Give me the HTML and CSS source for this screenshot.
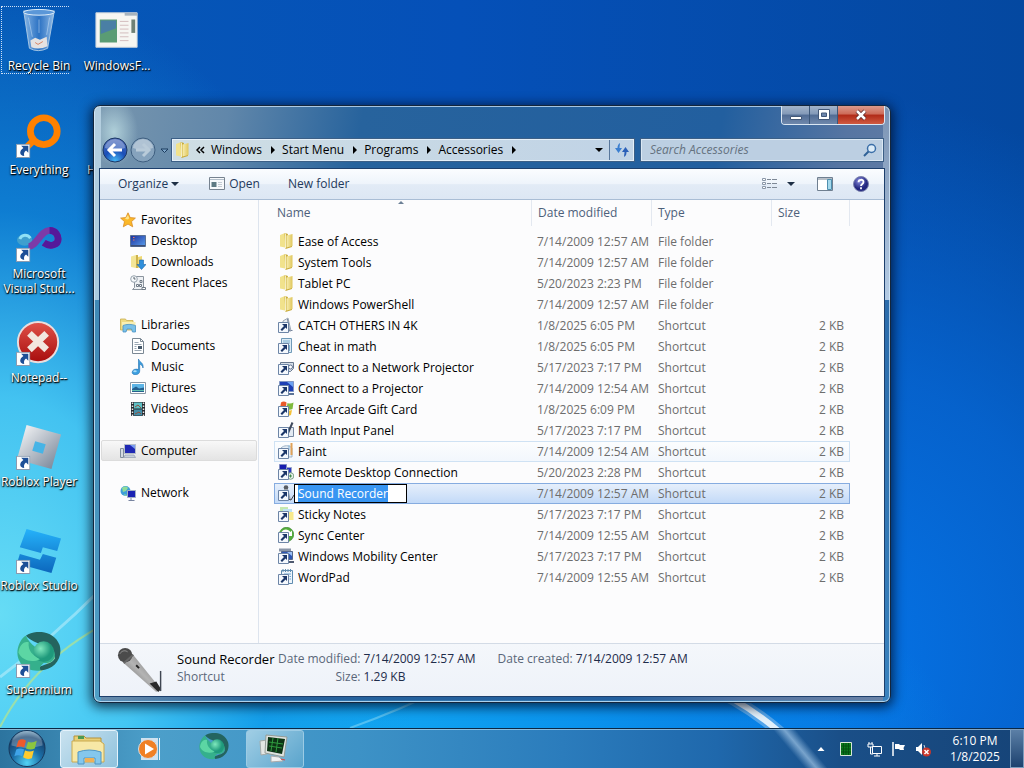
FILE: index.html
```
<!DOCTYPE html>
<html lang="en">
<head>
    <meta charset="utf-8">
    <title>Accessories</title>
    <link rel="stylesheet" href="styles.css">
</head>
<body>
    <!-- shared icons -->
    <svg class="sprite" aria-hidden="true">
        <defs>
            <linearGradient id="g-folder" x1="0" x2="1"><stop offset="0" stop-color="#f8eeb0"/><stop offset="1" stop-color="#dfc65c"/></linearGradient>
            <linearGradient id="g-blue" x1="0" x2="1" y1="0" y2="1"><stop offset="0" stop-color="#1c2f9c"/><stop offset="1" stop-color="#5aa0ee"/></linearGradient>
            <linearGradient id="g-silver" x1="0" x2="1" y1="0" y2="1"><stop offset="0" stop-color="#fdfdfd"/><stop offset="1" stop-color="#6f7e92"/></linearGradient>
            <linearGradient id="g-studio" x1="0" x2="0" y1="0" y2="1"><stop offset="0" stop-color="#25b2fa"/><stop offset="1" stop-color="#0c67bd"/></linearGradient>
            <linearGradient id="g-red" x1="0" x2="0" y1="0" y2="1"><stop offset="0" stop-color="#e0534a"/><stop offset="1" stop-color="#a80d0d"/></linearGradient>
            <linearGradient id="g-bin" x1="0" x2="1"><stop offset="0" stop-color="#a9cdf0" stop-opacity=".8"/><stop offset=".5" stop-color="#3c7cc8" stop-opacity=".7"/><stop offset="1" stop-color="#b8d6f2" stop-opacity=".8"/></linearGradient>
            <linearGradient id="g-mic" x1="0" x2="1" y1="1" y2="0"><stop offset="0" stop-color="#444"/><stop offset=".5" stop-color="#b4b4b4"/><stop offset="1" stop-color="#666"/></linearGradient>
            <radialGradient id="g-help" cx=".4" cy=".3"><stop offset="0" stop-color="#8a8ee0"/><stop offset="1" stop-color="#22267f"/></radialGradient>
            <radialGradient id="g-merm" cx=".35" cy=".35"><stop offset="0" stop-color="#7fe8bd"/><stop offset="1" stop-color="#1f9a7c"/></radialGradient>
            <radialGradient id="g-orb" cx=".5" cy=".9" r=".9"><stop offset="0" stop-color="#52d3f5"/><stop offset=".45" stop-color="#1b6fa8"/><stop offset=".8" stop-color="#16426e"/><stop offset="1" stop-color="#7ba6c2"/></radialGradient>
            <radialGradient id="g-back" cx=".5" cy=".95" r=".9"><stop offset="0" stop-color="#45b8f5"/><stop offset=".5" stop-color="#1b4fb8"/><stop offset="1" stop-color="#4a69b8"/></radialGradient>
        </defs>

        <symbol id="arrow" viewBox="0 0 14 14">
            <path d="M.5.5h13v13H.5z" fill="#fff" stroke="#8a9bb0"/>
            <path d="M5 2h7v7L9.800 6.800C8 8 7.500 9.500 8 12 3.500 11.500 2.500 7.500 7.200 4.200z" fill="#1d4f97"/>
        </symbol>
        <symbol id="link" viewBox="0 0 11 11">
            <path d="M.5.5h10v10H.5z" fill="#f4f8fd" stroke="#6d85a6"/>
            <path d="M4 2h5v5L7.500 5.500 4 9 2.500 7.500 6 4z" fill="#1b3668"/>
        </symbol>
        <symbol id="folder" viewBox="0 0 16 16">
            <path d="M2 2 7 0v14.500L2 13.500z" fill="#f1e28c"/>
            <path d="M6.500 .5H9l1 1v11l4-1v2.500L7.500 16z" fill="#c9ab38"/>
            <path d="M8.500 2.500 14.500 1v12l-6 1.500z" fill="url(#g-folder)"/>
            <path d="M7.500 1v14" stroke="#fffbe0" stroke-width=".8"/>
        </symbol>
        <symbol id="star" viewBox="0 0 16 16">
            <path d="m8 .8 2.200 4.800 5.200.5-3.900 3.500 1.200 5.200L8 12.100l-4.700 2.700 1.200-5.200L.6 6.100l5.200-.5z" fill="#fbb829" stroke="#d98b24" stroke-width=".8"/>
            <path d="m8 3 1.200 3.300L8 7.500 5 7z" fill="#ffe58a"/>
        </symbol>
        <symbol id="desktop" viewBox="0 0 16 16">
            <path d="M.5 2.500h15v11H.5z" fill="url(#g-blue)" stroke="#5b7296"/>
            <path d="M1 12h14v1.500H1z" fill="#3c4f78"/><path d="M3 4.500h1.500M3 7h1.500" stroke="#e9785a"/>
        </symbol>
        <symbol id="downloads" viewBox="0 0 16 16">
            <path d="M1 2.500 6 1v13l-5-1z" fill="#f3e596"/><path d="M6 1h2v13H6z" fill="#cdb24c"/><path d="M8 3l4-1v11l-4 1z" fill="#efd874"/>
            <path d="M9.500 6h4v4.500H16l-4.500 5-4.500-5h2.500z" fill="#2f8fdc" stroke="#1b64a8" stroke-width=".6"/>
        </symbol>
        <symbol id="recent" viewBox="0 0 16 16">
            <path d="M4.500 1.500h9v13h-11l2-2z" fill="#eef1f4" stroke="#8b949e"/>
            <path d="M12 12.500h3.500v2H12zM6.500 9.500h2v2h-2zM10 5.500h2v2h-2zM9.500 9.500h2v2h-2z" fill="#fff" stroke="#6e7984"/>
            <circle cx="4" cy="4" r="3.300" fill="#f6f9fb" stroke="#97a2ad"/><path d="M4 2v2h1.500" fill="none" stroke="#55606b"/>
        </symbol>
        <symbol id="libraries" viewBox="0 0 16 16">
            <path d="M.5 2h5l1 1.500H13V13H.5z" fill="#efdc84" stroke="#c9ad4e" stroke-width=".8"/>
            <path d="M2 5h13.500v4H2z" fill="#f9efb4"/>
            <path d="M3 8.500c3-1.500 9-1.500 12.500 0V15h-3l-1-3H7l-1 3H3z" fill="#79c0e8" stroke="#4a93c4" stroke-width=".8"/>
        </symbol>
        <symbol id="documents" viewBox="0 0 16 16">
            <path d="M2.500.5h8l3 3v12h-11z" fill="#fff" stroke="#7b8894"/><path d="M10.500.5v3h3" fill="none" stroke="#7b8894"/>
            <path d="M4.500 4.500h4M4.500 6.500h7M4.500 8.500h2M4.500 10.500h2M4.500 12.500h7" stroke="#9aa7b3"/><path d="M8 8h4v3H8z" fill="#46586a"/>
        </symbol>
        <symbol id="music" viewBox="0 0 16 16">
            <path d="M8.500 0c.5 3 5.500 3.500 4.500 9-.5-2.500-2-3.500-3.300-3.800V12c0 5-8.200 4.500-7.500 1 .5-2.500 3.300-3.500 6.300-2.500z" fill="#3c9fe0" stroke="#1f6eb0" stroke-width=".6"/>
            <ellipse cx="5" cy="12.300" rx="1.800" ry="1" fill="#a8dcf8"/>
        </symbol>
        <symbol id="pictures" viewBox="0 0 16 16">
            <path d="M.5 2.500h15v11H.5z" fill="#fff" stroke="#8a97a5"/><path d="M2 4h12v8H2z" fill="#5db4e6"/><path d="m2 9 4-2.500 3 2 5-1V12H2z" fill="#245f8f"/><path d="M2 10.500h12" stroke="#62c3b0"/>
        </symbol>
        <symbol id="videos" viewBox="0 0 16 16">
            <path d="M1 1h14v14H1z" fill="#25292e"/><path d="M4 1.500h8v6H4z" fill="#5fc0c4"/><path d="M4 8.500h8v6H4z" fill="#458ea8"/>
            <path d="M2.500 1.500v14M13.500 1.500v14" stroke="#e8e8e8" stroke-width="1.500" stroke-dasharray="1.500 1.500"/><path d="m5 6 3-2 3 3M5 13l4-2 2 2" stroke="#8f5140" fill="none"/>
        </symbol>
        <symbol id="computer" viewBox="0 0 16 16">
            <path d="M4.500 1.500h11v9h-11z" fill="#1f28b4" stroke="#b4bdc9"/><path d="M10 2h5v4z" fill="#7a9cf0"/>
            <path d="M.5 5.500h3v9h-3z" fill="#d3dae2" stroke="#808d9c"/><path d="M5 12h9l1.500 2.500H4z" fill="#c7d0dc" stroke="#8694a8" stroke-width=".6"/>
        </symbol>
        <symbol id="network" viewBox="0 0 16 16">
            <circle cx="5.500" cy="6" r="5" fill="#3e9fd8"/><path d="M2 3c2-2 5-2 6 0L6 6 3 7zM4 9l3 1-2 1z" fill="#8fdc9a"/>
            <path d="M7.500 5.500h8v7h-8z" fill="#1a22b2" stroke="#a3b0c2"/><path d="M11 13v2M8.500 15.500h6" stroke="#7884a0"/>
        </symbol>

        <!-- shortcut targets, the link arrow sits bottom left -->
        <symbol id="f-catch" viewBox="0 0 16 16"><path d="M5 4 10 1l3 13H5z" fill="#e8edf3" stroke="#9aa6b5"/><path d="M9.500 2l2 12M12.500 13.500h2" stroke="#74839a"/><use href="#link" y="5" width="11" height="11"/></symbol>
        <symbol id="f-page" viewBox="0 0 16 16"><path d="M3.500.5h10v14h-10z" fill="#dcebf5" stroke="#6f9ab8"/><path d="M5 3h7M5 5h7M11.500 7v6" stroke="#79b0d0"/><use href="#link" y="5" width="11" height="11"/></symbol>
        <symbol id="f-netproj" viewBox="0 0 16 16"><path d="M2.500 3.500h13v6l-3 3h-10z" fill="#d6dfe9" stroke="#68788e"/><circle cx="12.500" cy="8" r="2" fill="#fff" stroke="#5f7191"/><use href="#link" y="5" width="11" height="11"/></symbol>
        <symbol id="f-proj" viewBox="0 0 16 16"><path d="M1.500 1.500h14v10h-14z" fill="#1d3fb4" stroke="#7f95c4"/><path d="M9 2h6v5z" fill="#6da2f2"/><path d="M11 13h5v2h-5z" fill="#5b7396"/><use href="#link" y="5" width="11" height="11"/></symbol>
        <symbol id="f-gift" viewBox="0 0 16 16"><path d="M3 1.500c2-1.500 4-1 5.500 0L8 7H2z" fill="#e85a2a"/><path d="M9.500 2c2 1 4 .5 6-.5L14.500 8c-2 1-4 1-6 0z" fill="#7fba3c"/><path d="M8 9c2 1 4 .5 6 0l-1 5c-2 1-4 .5-5 0z" fill="#f4c136"/><use href="#link" y="5" width="11" height="11"/></symbol>
        <symbol id="f-math" viewBox="0 0 16 16"><path d="M2.500 5.500h13v9h-13z" fill="#e3eaf2" stroke="#7788a0"/><path d="m10 11 4.500-10.500" stroke="#3f4a5e" stroke-width="2"/><use href="#link" y="5" width="11" height="11"/></symbol>
        <symbol id="f-paint" viewBox="0 0 16 16"><path d="M3 5c3-3 8-3 11 0v9H3z" fill="#e5eef6" stroke="#9fb3c6"/><path d="M13.500 0v12" stroke="#e0a258" stroke-width="2"/><path d="M11 2v5" stroke="#87b9dd"/><use href="#link" y="5" width="11" height="11"/></symbol>
        <symbol id="f-remote" viewBox="0 0 16 16"><path d="M1.500.5h7v6h-7z" fill="#1a1fae" stroke="#7e8ac2"/><path d="M8.500 3.500h5v6h-5z" fill="#2a36c2" stroke="#98a6c8"/><circle cx="12.500" cy="12" r="3.300" fill="#e9f2ea" stroke="#7c9f87"/><path d="M11 12h3M12.500 10.500v3" stroke="#3f8b4a"/><use href="#link" y="5" width="11" height="11"/></symbol>
        <symbol id="f-sound" viewBox="0 0 16 16"><circle cx="8" cy="2.500" r="2.300" fill="#565b62"/><path d="M6 4h4l3 11H8z" fill="#9ca2aa"/><path d="m10 14 3 1 3-5" fill="none" stroke="#444"/><use href="#link" y="5" width="11" height="11"/></symbol>
        <symbol id="f-sticky" viewBox="0 0 16 16"><path d="M2 1h8v8H2z" fill="#c4e8b0"/><path d="M5 3h9v9H5z" fill="#bfe3f4"/><path d="M7 6h8.500v8H7z" fill="#f8ea8c"/><use href="#link" y="5" width="11" height="11"/></symbol>
        <symbol id="f-sync" viewBox="0 0 16 16"><circle cx="8.500" cy="7.500" r="7.200" fill="#55ae3c" stroke="#2f7c26" stroke-width=".6"/><path d="M3 6c2-4.500 7-4.500 9.500-1L14 3.500V9H9l1.500-1.700C9.500 5 7 5 5.500 7z" fill="#fff"/><use href="#link" y="5" width="11" height="11"/></symbol>
        <symbol id="f-mobility" viewBox="0 0 16 16"><path d="M1 .5h12v3H1z" fill="#8a96a8"/><path d="M3.500 3.500h11v8h-11z" fill="#2c56b4" stroke="#55678a"/><path d="M10 13h6v2h-6z" fill="#4e5a70"/><path d="M9 4h5v4z" fill="#9cc0f4"/><use href="#link" y="5" width="11" height="11"/></symbol>
        <symbol id="f-wordpad" viewBox="0 0 16 16"><path d="M3.500 1.500h11v13h-11z" fill="#eef5fb" stroke="#5f8cb0"/><path d="M5 0v3M7.500 0v3M10 0v3M12.500 0v3" stroke="#5f8cb0"/><path d="M6 5h7M11.500 7.500H13M11.500 10H13" stroke="#6aa6d2"/><use href="#link" y="5" width="11" height="11"/></symbol>

        <symbol id="mermaid" viewBox="0 0 48 44">
            <path d="M10 4C20-3 40-2 46 14c4 14-6 26-20 27-8-6 12-5 15-13C38 12 20 15 10 4z" fill="#24645f"/>
            <path d="M10 4c2 5 6 9 10 12 8-6 20-2 21 8 0 7-6 10-12 9-4 4-5 5-3 8C10 43 0 33 1 20 2 12 6 6 10 4z" fill="#35b08c"/>
            <circle cx="29" cy="21" r="11" fill="url(#g-merm)"/>
            <path d="M2 22C3 14 8 9 13 11c-1 9 4 14 12 18-8 4-19 2-23-7z" fill="#5cd6a4"/>
        </symbol>
    </svg>

    <main class="desktop">
        <svg class="wallpaper" viewBox="0 0 1024 728" preserveAspectRatio="none" aria-hidden="true">
            <path d="M0 677Q50 640 100 590" fill="none" stroke="#c9f2fb" stroke-opacity=".5" stroke-width="3"/>
            <path d="M0 727Q40 650 130 612" fill="none" stroke="#c7e77c" stroke-opacity=".6" stroke-width="2"/>
            <path d="M350 728Q400 710 440 690" fill="none" stroke="#8fdcf6" stroke-opacity=".5" stroke-width="2"/>
            <path d="M700 684Q740 698 782 734" fill="none" stroke="#9cc8ee" stroke-opacity=".5" stroke-width="12"/>
            <path d="M700 684Q740 698 782 734" fill="none" stroke="#f2f8fc" stroke-opacity=".9" stroke-width="6"/>
        </svg>

        <div class="icons">
            <a class="icon icon-focus" href="#">
                <svg viewBox="0 0 48 48"><path d="m8 3 6 39q9 5 19 0l7-39z" fill="url(#g-bin)" stroke="#a8c8e4"/><ellipse cx="24" cy="4.500" rx="16" ry="3" fill="#5b97d8" stroke="#e2effa"/><path d="m15 34 5-3 5 2 7-3 1 10q-9 4-17 1z" fill="#e4e2e2"/><path d="m20 36 3 2 5-3" stroke="#d8825f" fill="none"/><path d="M13 10l4 20M35 10l-3 18M24 12v14" stroke="#d6e8f8" stroke-opacity=".5"/></svg>
                <span>Recycle Bin</span>
            </a>
            <a class="icon" href="#">
                <svg viewBox="0 0 48 48"><path d="M2 5h43v36H2z" fill="#f6f6f2" stroke="#c9d2da"/><path d="M32 5h13v3H32z" fill="#a8b4be"/><path d="M6 12h18v24H6z" fill="#5a9c74"/><path d="M7 13h16v8L7 27z" fill="#4a7fa5"/><path d="M27 14h9M27 18h9M27 22h9M27 26h9M27 30h9M27 34h9" stroke="#d3bcbc"/><path d="M39 12h4v14h-4z" fill="#6f8076"/></svg>
                <span>WindowsF...</span>
            </a>
            <a class="icon" href="#">
                <svg viewBox="0 0 48 48"><circle cx="29" cy="20" r="14" fill="none" stroke="#ff8100" stroke-width="7"/><path d="m20 28-9 9" stroke="#ff8100" stroke-width="7"/><use href="#arrow" y="33" width="15" height="15"/></svg>
                <span>Everything</span>
            </a>
            <a class="icon icon-cut" href="#">
                <svg viewBox="0 0 48 48"></svg>
                <span>H</span>
            </a>
            <a class="icon" href="#">
                <svg viewBox="0 0 48 48"><ellipse cx="9" cy="25" rx="8" ry="6" fill="#3f9fce"/><path d="M4 24c2-5 8-5 11-1" stroke="#8fe0f6" stroke-width="3" fill="none"/><path d="M13 32c8 0 13-17 22-17 7 0 9 6 9 9 0 6-8 9-15 4" fill="none" stroke="#7c3aa8" stroke-width="7"/><path d="M29 28c7 5 15 2 15-4 0-3-2-9-9-9" fill="none" stroke="#55189a" stroke-width="7"/><use href="#arrow" y="33" width="15" height="15"/></svg>
                <span>Microsoft Visual&nbsp;Stud...</span>
            </a>
            <i></i>
            <a class="icon" href="#">
                <svg viewBox="0 0 48 48"><circle cx="23" cy="23" r="21" fill="url(#g-red)" stroke="#e9dede" stroke-width="2"/><path d="m14 14 18 17M32 14 14 31" stroke="#f2e7df" stroke-width="7"/><use href="#arrow" y="33" width="15" height="15"/></svg>
                <span>Notepad--</span>
            </a>
            <i></i>
            <a class="icon" href="#">
                <svg viewBox="0 0 48 48"><path d="m11 1 36 10-10 36L1 37z" fill="url(#g-silver)"/><path d="m20 18 11 3-3 10-11-3z" fill="#47b4e6"/><use href="#arrow" y="33" width="15" height="15"/></svg>
                <span>Roblox&nbsp;Player</span>
            </a>
            <i></i>
            <a class="icon" href="#">
                <svg viewBox="0 0 48 48"><path d="m11 1 36 10-4 13-15-4-2 6L4 20zM4 27l21 6 3-6 14 4-5 16L1 37z" fill="url(#g-studio)"/><use href="#arrow" y="33" width="15" height="15"/></svg>
                <span>Roblox&nbsp;Studio</span>
            </a>
            <i></i>
            <a class="icon" href="#">
                <svg viewBox="0 0 48 48"><use href="#mermaid" width="48" height="43"/><use href="#arrow" y="33" width="15" height="15"/></svg>
                <span>Supermium</span>
            </a>
        </div>

        <section class="window" aria-label="Accessories">
            <header class="titlebar">
                <div class="caption">
                    <button class="cap cap-min" aria-label="Minimize"><svg viewBox="0 0 14 12"><path d="M1.500 7.500h11v3h-11z" fill="#fff" stroke="#435878"/></svg></button>
                    <button class="cap cap-max" aria-label="Maximize"><svg viewBox="0 0 14 12"><path d="M1.500.5h11v10h-11z" fill="#fff" stroke="#435878"/><path d="M4.500 4h5v3.500h-5z" fill="#6c86ab" stroke="#435878"/></svg></button>
                    <button class="cap cap-close" aria-label="Close"><svg viewBox="0 0 14 12"><path d="m3 2 8 8M11 2l-8 8" stroke="#5b2626" stroke-width="4"/><path d="m3 2 8 8M11 2l-8 8" stroke="#fff" stroke-width="2.500"/></svg></button>
                </div>
            </header>

            <div class="address">
                <button class="nav-btn" aria-label="Back"><svg viewBox="0 0 26 26"><circle cx="13" cy="13" r="12" fill="url(#g-back)" stroke="#1c3764"/><path d="M3 11a10 9 0 0 1 20 0q-10 4-20 0z" fill="#fff" fill-opacity=".3"/><path d="M20 13H8m5-6-6 6 6 6" fill="none" stroke="#fff" stroke-width="3"/></svg></button>
                <button class="nav-btn" aria-label="Forward"><svg viewBox="0 0 26 26"><circle cx="13" cy="13" r="12" fill="#86a3bd" stroke="#3f5f80"/><path d="M3 11a10 9 0 0 1 20 0q-10 4-20 0z" fill="#fff" fill-opacity=".35"/><path d="M6 13h12m-5-6 6 6-6 6" fill="none" stroke="#b9cbd9" stroke-width="3"/></svg></button>
                <button class="nav-drop" aria-label="Recent pages"><svg viewBox="0 0 9 6"><path d="M1 1h7L4.500 4.500z" fill="#7fa8cc" stroke="#1b3a5c"/></svg></button>
                <nav class="path">
                    <svg class="i16"><use href="#folder"/></svg>
                    <button aria-label="More folders"><svg class="more" viewBox="0 0 9 8"><path d="M4 1 1 4l3 3M8 1 5 4l3 3" fill="none" stroke="#000" stroke-width="1.500"/></svg></button>
                    <button>Windows</button><b></b>
                    <button>Start Menu</button><b></b>
                    <button>Programs</button><b></b>
                    <button>Accessories</button><b></b>
                    <span class="grow"></span>
                    <i class="caret"></i>
                    <button class="refresh" aria-label="Refresh"><svg viewBox="0 0 16 16"><path d="M6 1C4 2 3.500 4 3.500 6H1l3.500 5L8 6H5.500C5.500 4 6 3 6 1z" fill="#3b7fd0"/><path d="M10 15c2-1 2.500-3 2.500-5H15l-3.500-5L8 10h2.500c0 2-.5 3-.5 5z" fill="#2a5fb8"/></svg></button>
                </nav>
                <label class="search">
                    <input type="text" placeholder="Search Accessories" aria-label="Search Accessories">
                    <svg viewBox="0 0 14 14"><circle cx="8.500" cy="5.500" r="4" fill="#dcecf8" stroke="#3b6fa8" stroke-width="1.500"/><path d="m5.500 8.500-4.500 4.500" stroke="#2f6196" stroke-width="2"/></svg>
                </label>
            </div>

            <div class="client">
                <div class="toolbar">
                    <button class="organize">Organize <i class="caret"></i></button>
                    <button class="open"><svg class="i16" viewBox="0 0 16 16"><path d="M.5 1.500h15v12H.5z" fill="#f7f9fb" stroke="#76828f"/><path d="M1 3.500h14" stroke="#b3bfca"/><path d="M2.500 6h5v5h-5z" fill="#5e7a83"/><path d="M9 6.500h4M9 8.500h4M9 10.500h4" stroke="#c3cbd3"/></svg>Open</button>
                    <button>New folder</button>
                    <span class="grow"></span>
                    <button class="views" aria-label="Change your view"><svg class="i16" viewBox="0 0 16 16"><path d="M.5 2.500h3v2h-3zM.5 6.500h3v2h-3zM.5 10.500h3v2h-3z" fill="#fff" stroke="#8a97a8"/><path d="M5 3.500h4M5 7.500h4M5 11.500h4M10 3.500h5M10 7.500h5M10 11.500h5" stroke="#7d8896"/></svg><i class="caret"></i></button>
                    <button class="preview" aria-label="Show the preview pane"><svg class="i16" viewBox="0 0 16 16"><path d="M.5 1.500h15v13H.5z" fill="#fff" stroke="#6f7f90"/><path d="M.5 3h15" stroke="#6f7f90"/><path d="M10.500 3.500h4v10h-4z" fill="#a5d9ec" stroke="#4f8fae"/></svg></button>
                    <button class="help" aria-label="Get help"><svg class="i16" viewBox="0 0 16 16"><circle cx="8" cy="8" r="7.500" fill="url(#g-help)" stroke="#7b82ae"/><path d="M5.500 6.200C5.500 3 10.500 3 10.500 6c0 2-2.500 1.900-2.500 4M8 11.200v2" fill="none" stroke="#fff" stroke-width="1.800"/></svg></button>
                </div>

                <div class="panes">
                    <nav class="tree">
                        <a href="#"><svg class="i16"><use href="#star"/></svg>Favorites</a>
                        <a class="sub" href="#"><svg class="i16"><use href="#desktop"/></svg>Desktop</a>
                        <a class="sub" href="#"><svg class="i16"><use href="#downloads"/></svg>Downloads</a>
                        <a class="sub" href="#"><svg class="i16"><use href="#recent"/></svg>Recent Places</a>
                        <a class="group" href="#"><svg class="i16"><use href="#libraries"/></svg>Libraries</a>
                        <a class="sub" href="#"><svg class="i16"><use href="#documents"/></svg>Documents</a>
                        <a class="sub" href="#"><svg class="i16"><use href="#music"/></svg>Music</a>
                        <a class="sub" href="#"><svg class="i16"><use href="#pictures"/></svg>Pictures</a>
                        <a class="sub" href="#"><svg class="i16"><use href="#videos"/></svg>Videos</a>
                        <a class="group current" href="#"><svg class="i16"><use href="#computer"/></svg>Computer</a>
                        <a class="group" href="#"><svg class="i16"><use href="#network"/></svg>Network</a>
                    </nav>

                    <div class="list">
                        <table class="files">
                            <thead>
                                <tr><th class="c-name sorted">Name</th><th class="c-date">Date modified</th><th class="c-type">Type</th><th class="c-size">Size</th></tr>
                            </thead>
                            <tbody>
                                <tr><td><svg class="i16"><use href="#folder"/></svg>Ease of Access</td><td>7/14/2009 12:57 AM</td><td>File folder</td><td></td></tr>
                                <tr><td><svg class="i16"><use href="#folder"/></svg>System Tools</td><td>7/14/2009 12:57 AM</td><td>File folder</td><td></td></tr>
                                <tr><td><svg class="i16"><use href="#folder"/></svg>Tablet PC</td><td>5/20/2023 2:23 PM</td><td>File folder</td><td></td></tr>
                                <tr><td><svg class="i16"><use href="#folder"/></svg>Windows PowerShell</td><td>7/14/2009 12:57 AM</td><td>File folder</td><td></td></tr>
                                <tr><td><svg class="i16"><use href="#f-catch"/></svg>CATCH OTHERS IN 4K</td><td>1/8/2025 6:05 PM</td><td>Shortcut</td><td>2 KB</td></tr>
                                <tr><td><svg class="i16"><use href="#f-page"/></svg>Cheat in math</td><td>1/8/2025 6:05 PM</td><td>Shortcut</td><td>2 KB</td></tr>
                                <tr><td><svg class="i16"><use href="#f-netproj"/></svg>Connect to a Network Projector</td><td>5/17/2023 7:17 PM</td><td>Shortcut</td><td>2 KB</td></tr>
                                <tr><td><svg class="i16"><use href="#f-proj"/></svg>Connect to a Projector</td><td>7/14/2009 12:54 AM</td><td>Shortcut</td><td>2 KB</td></tr>
                                <tr><td><svg class="i16"><use href="#f-gift"/></svg>Free Arcade Gift Card</td><td>1/8/2025 6:09 PM</td><td>Shortcut</td><td>2 KB</td></tr>
                                <tr><td><svg class="i16"><use href="#f-math"/></svg>Math Input Panel</td><td>5/17/2023 7:17 PM</td><td>Shortcut</td><td>2 KB</td></tr>
                                <tr class="hover"><td><svg class="i16"><use href="#f-paint"/></svg>Paint</td><td>7/14/2009 12:54 AM</td><td>Shortcut</td><td>2 KB</td></tr>
                                <tr><td><svg class="i16"><use href="#f-remote"/></svg>Remote Desktop Connection</td><td>5/20/2023 2:28 PM</td><td>Shortcut</td><td>2 KB</td></tr>
                                <tr class="selected"><td><svg class="i16"><use href="#f-sound"/></svg><input class="rename" type="text" value="Sound Recorder" aria-label="File name"></td><td>7/14/2009 12:57 AM</td><td>Shortcut</td><td>2 KB</td></tr>
                                <tr><td><svg class="i16"><use href="#f-sticky"/></svg>Sticky Notes</td><td>5/17/2023 7:17 PM</td><td>Shortcut</td><td>2 KB</td></tr>
                                <tr><td><svg class="i16"><use href="#f-sync"/></svg>Sync Center</td><td>7/14/2009 12:55 AM</td><td>Shortcut</td><td>2 KB</td></tr>
                                <tr><td><svg class="i16"><use href="#f-mobility"/></svg>Windows Mobility Center</td><td>5/17/2023 7:17 PM</td><td>Shortcut</td><td>2 KB</td></tr>
                                <tr><td><svg class="i16"><use href="#f-wordpad"/></svg>WordPad</td><td>7/14/2009 12:55 AM</td><td>Shortcut</td><td>2 KB</td></tr>
                            </tbody>
                        </table>
                    </div>
                </div>

                <footer class="details">
                    <svg viewBox="0 0 48 48"><path d="m6 16 10-9 29 36-4 4z" fill="url(#g-mic)"/><path d="m34 38 9 9 3-3-5-8z" fill="#2a2a2a"/><circle cx="8.500" cy="8.500" r="7.500" fill="#4b4b4b"/><path d="m7 17 10-9" stroke="#666" stroke-width="2"/><path d="M3 7c2-3 5-4 8-2" stroke="#999" fill="none"/><path d="m20 19 3 3" stroke="#222" stroke-width="2"/><path d="M45.500 25v21" stroke="#3f4652" stroke-width="1.500"/></svg>
                    <div class="d-name"><strong>Sound Recorder</strong><span>Shortcut</span></div>
                    <dl>
                        <dt>Date modified:</dt><dd>7/14/2009 12:57 AM</dd>
                        <dt>Size:</dt><dd>1.29 KB</dd>
                    </dl>
                    <dl>
                        <dt>Date created:</dt><dd>7/14/2009 12:57 AM</dd>
                    </dl>
                </footer>
            </div>
        </section>
    </main>

    <footer class="taskbar">
        <button class="start" aria-label="Start"><svg viewBox="0 0 40 40"><circle cx="20" cy="20" r="18.500" fill="url(#g-orb)" stroke="#16365a"/><path d="M4 17a16 15 0 0 1 32 0q-16 5-32 0z" fill="#fff" fill-opacity=".25"/><path d="M11 12q4-3 8 0l-2 7q-4-2-8 0z" fill="#ee5a2c"/><path d="M21 13q4 2 9-1l-2 8q-4 2-9 0z" fill="#8cc63f"/><path d="M9 21q4-2 8 0l-2 7q-4-2-8 0z" fill="#3fa3e8"/><path d="M18 22q5 2 9 0l-2 8q-5 2-9-1z" fill="#ffcb2f"/></svg></button>
        <button class="task active" aria-label="Windows Explorer"><svg viewBox="0 0 36 32"><path d="M3 3h10l2 2h15v22H3z" fill="#e8cf76" stroke="#b5923a"/><path d="M7 3h6v3H7z" fill="#4d9a52"/><path d="M1 8h28l4 3v18H1z" fill="#f7e8a6" stroke="#caa94e"/><path d="M7 19q11-4 23 0v12h-6v-6H13v6H7z" fill="#85c7ec" stroke="#4f96c6"/><path d="M14 25h9v4h-9z" fill="#efb057"/></svg></button>
        <button class="task" aria-label="Media Player"><svg viewBox="0 0 36 32"><path d="M8 5h17v22H8z" fill="#cfe2f0"/><path d="M26.500 5v22" stroke="#eaf4fb"/><circle cx="15" cy="16" r="9.500" fill="#f08024" stroke="#d6dee6"/><path d="m12 10.500 9 5.500-9 5.500z" fill="#fff"/></svg></button>
        <button class="task" aria-label="Supermium"><svg viewBox="0 0 36 32"><use href="#mermaid" x="3" y="0" width="32" height="28"/></svg></button>
        <button class="task running" aria-label="Resource monitor"><svg viewBox="0 0 36 32"><path d="m3 8 7-1v14l-6 1z" fill="#e3e6e4" stroke="#a5aaa8"/><path d="m9 2 21 2-3 20-19-4z" fill="#dfe3df" stroke="#939b96"/><path d="m11 4 17 2-3 15-15-3z" fill="#0d3315"/><path d="m12 9 14 2M12 13l13 2M16 5l-2 13M21 5l-2 14" stroke="#2f9a3f"/><path d="m14 23 8 1 4 4-12 1z" fill="#f0f0f0" stroke="#aaa"/><path d="m24 26 4 1" stroke="#d44"/></svg></button>
        <span class="grow"></span>
        <div class="tray">
            <button aria-label="Show hidden icons"><svg viewBox="0 0 8 16"><path d="M.5 10h7L4 6z" fill="#fff"/></svg></button>
            <button class="t-cpu" aria-label="CPU meter"><svg viewBox="0 0 12 16"><path d="M.5 1.500h11v13H.5z" fill="#0a7a1c" stroke="#d8e6da"/><path d="M3.500 2v12M6 2v12M8.500 2v12M1 5h10M1 8h10M1 11h10" stroke="#045010"/></svg></button>
            <button class="t-net" aria-label="Network"><svg viewBox="0 0 16 16"><path d="M5.500 5.500h9v7h-9zM10 13v2M7 15h6" fill="none" stroke="#fff"/><path d="M1 3h5v3H1zM2 1v2M5 1v2M3.500 6v7H6" fill="none" stroke="#fff"/></svg></button>
            <button class="t-flag" aria-label="Action Center"><svg viewBox="0 0 16 16"><path d="M2 1v14" stroke="#fff" stroke-width="1.500"/><path d="M4 3h4l1 1h5l-1.500 3 .5 2H9L8 8H4z" fill="#fff"/></svg></button>
            <button class="t-vol" aria-label="Volume muted"><svg viewBox="0 0 16 16"><path d="M1 6h2l4-4v12l-4-4H1z" fill="#fff"/><path d="M9 4q2 3 0 7" stroke="#cfdae6" fill="none"/><circle cx="11.500" cy="11" r="4.500" fill="#c8372c"/><path d="m9.500 9 4 4M13.500 9l-4 4" stroke="#fff" stroke-width="1.500"/></svg></button>
            <button class="clock"><time>6:10 PM<br>1/8/2025</time></button>
        </div>
        <button class="show-desktop" aria-label="Show desktop"></button>
    </footer>

    <script>
        const rename = document.querySelector('.rename');
        rename.focus();
        rename.select();
    </script>
</body>
</html>
```
FILE: styles.css
```
* {
    box-sizing: border-box;
}
html, body {
    height: 100%;
    margin: 0;
}
body {
    display: flex;
    flex-direction: column;
    overflow: hidden;
    font-family: "Open Sans", "Noto Sans", sans-serif;
    font-size: 12px;
    line-height: 16px;
    color: #000;
    background:
        radial-gradient(ellipse 420px 620px at 0 80%, #66dcf5 0, rgba(70, 200, 244, .95) 35%, rgba(20, 150, 228, .6) 65%, rgba(24, 130, 220, 0) 100%),
        radial-gradient(ellipse 700px 300px at 26% 100%, #16b4f6 0, rgba(10, 150, 240, .9) 50%, rgba(10, 130, 230, 0) 100%),
        radial-gradient(ellipse 480px 560px at 82% 85%, #0573e6 0, rgba(6, 104, 214, .8) 50%, rgba(8, 90, 190, 0) 100%),
        linear-gradient(90deg, #0658b6, #0550b8 45%, #0448a0);
}
button {
    padding: 0;
    border: 0;
    background: none;
    font: inherit;
    color: inherit;
}
a {
    color: inherit;
    text-decoration: none;
}
.sprite {
    position: absolute;
    width: 0;
    height: 0;
}
.i16 {
    flex: none;
    width: 16px;
    height: 16px;
}
.grow {
    flex: 1;
}
.caret {
    display: inline-block;
    border: 4px solid transparent;
    border-top-color: #1e2f45;
    border-bottom: 0;
}

/* desktop */
.desktop {
    position: relative;
    flex: 1;
    min-height: 0;
}
.wallpaper {
    position: absolute;
    inset: 0;
    width: 100%;
    height: 100%;
}
.icons {
    position: relative;
    display: grid;
    grid-template-columns: 78px 78px;
    grid-auto-rows: 104px;
}
.icon {
    position: relative;
    display: flex;
    flex-direction: column;
    align-items: center;
    padding-top: 8px;
    color: #fff;
    text-align: center;
    line-height: 15px;
    text-shadow: 0 1px 2px #000, 1px 1px 1px #000;
}
.icon svg {
    flex: none;
    width: 46px;
    height: 46px;
    margin-bottom: 4px;
}
.icon-focus::before {
    content: "";
    position: absolute;
    inset: 6px 9px 30px 1px;
    border: 1px dotted #cfe0f4;
    border-right: 0;
}
.icon-cut {
    align-items: flex-start;
    padding-left: 9px;
}

/* explorer window */
.window {
    position: absolute;
    inset: 105px 133px 25px 93px;
    display: flex;
    flex-direction: column;
    padding: 0 5px 5px;
    border: 1px solid #14263c;
    border-radius: 7px;
    background:
        linear-gradient(#b5cfdf, #a9cade 194px, #3f89b6 194px, #4f9fc6) left / 7px 100% no-repeat,
        linear-gradient(#7b93b3, #b4cbe4 194px, #2c6cab 194px, #3a82bd) right / 7px 100% no-repeat,
        radial-gradient(ellipse 24px 34px at 20px 26px, rgba(190, 222, 228, .8), transparent),
        linear-gradient(transparent 75%, #4394c8) bottom / 100% 10px no-repeat,
        linear-gradient(100deg, #7896ae 0, #6187aa 15%, #27639d 30%, #225f9f 70%, #5675a2 84%, #6c84a8);
    box-shadow: inset 0 0 0 1px rgba(220, 240, 255, .7), 0 2px 12px 2px rgba(0, 10, 30, .75);
}
.titlebar {
    display: flex;
    justify-content: flex-end;
    height: 30px;
}
.caption {
    display: flex;
    height: 19px;
    border: 1px solid #dbe7f3;
    border-top: 0;
    border-radius: 0 0 4px 4px;
    overflow: hidden;
}
.cap {
    width: 28px;
    border-right: 1px solid #3d587a;
    background: linear-gradient(#a3b4ca, #8399b8 45%, #516c94 50%, #6f88ac);
}
.cap svg {
    display: block;
    width: 14px;
    height: 12px;
    margin: auto;
}
.cap-close {
    width: 46px;
    border: 0;
    background: linear-gradient(#dc9a8c, #cd6a57 45%, #b02a18 50%, #d05a40);
}
.address {
    display: flex;
    align-items: center;
    height: 28px;
    margin: 0 2px 4px 3px;
}
.nav-btn {
    width: 26px;
    height: 26px;
    margin-right: 2px;
}
.nav-btn svg {
    display: block;
}
.nav-drop {
    width: 12px;
    margin-right: 2px;
}
.nav-drop svg {
    width: 9px;
    height: 6px;
}
.path {
    flex: 1;
    display: flex;
    align-items: center;
    height: 22px;
    padding-left: 1px;
    border: 1px solid #e4eff8;
    outline: 1px solid #3c5f86;
    background: linear-gradient(90deg, #cfdee4, #c0d3e6);
}
.path button {
    margin-left: 6px;
}
.more {
    display: block;
    width: 9px;
    height: 8px;
}
.path b {
    margin: 0 1px 0 9px;
    border: 4px solid transparent;
    border-left-color: #000;
    border-right: 0;
}
.path .caret {
    margin-right: 6px;
    border-top-color: #000;
}
.path .refresh {
    width: 24px;
    height: 100%;
    margin: 0;
    border-left: 1px solid #58779c;
}
.refresh svg {
    display: block;
    width: 16px;
    margin: auto;
}
.search {
    flex: 0 1 242px;
    display: flex;
    align-items: center;
    height: 22px;
    margin-left: 7px;
    padding: 0 5px 0 8px;
    border: 1px solid #dbe8f4;
    outline: 1px solid #3c5f86;
    background: #bccfe2;
}
.search input {
    flex: 1;
    min-width: 0;
    padding: 0;
    border: 0;
    background: none;
    font: inherit;
}
.search input::placeholder {
    color: #65727f;
    font-style: italic;
}
.search svg {
    width: 14px;
    height: 14px;
}
.client {
    flex: 1;
    display: flex;
    flex-direction: column;
    min-height: 0;
    border: 1px solid #1d3f6c;
    background: #fcfcfd;
}
.toolbar {
    display: flex;
    align-items: center;
    height: 31px;
    padding: 0 15px 0 18px;
    border-bottom: 1px solid #a9bdd5;
    background: linear-gradient(#fbfdff, #eef4fb 50%, #e2ebf6 52%, #dde7f4);
    color: #1e395b;
}
.toolbar button {
    display: flex;
    align-items: center;
}
.organize {
    gap: 3px;
    margin-right: 30px;
}
.open {
    gap: 4px;
    margin-right: 28px;
}
.views {
    gap: 9px;
    margin-right: 22px;
}
.preview {
    margin-right: 20px;
}
.panes {
    flex: 1;
    display: flex;
    min-height: 0;
}
.tree {
    flex: none;
    width: 159px;
    padding: 9px 1px 0 1px;
    border-right: 1px solid #dde4ee;
}
.tree a {
    display: flex;
    align-items: center;
    gap: 5px;
    height: 21px;
    padding-left: 18px;
    border: 1px solid transparent;
}
.tree .sub {
    padding-left: 28px;
}
.tree .group {
    margin-top: 21px;
}
.tree .current {
    border-color: #dcdcdc;
    border-radius: 2px;
    background: linear-gradient(#f8f8f8, #e4e4e4);
}
.list {
    flex: 1;
    padding-left: 15px;
}
.files {
    border-collapse: separate;
    border-spacing: 0;
    table-layout: fixed;
    width: 576px;
}
.files th {
    height: 26px;
    padding: 0 0 0 6px;
    border-right: 1px solid #e3e8f0;
    color: #4c607a;
    font-weight: 400;
    text-align: left;
}
.files .c-name {
    width: 258px;
    padding-left: 3px;
}
.files .c-date, .files .c-type {
    width: 120px;
}
.sorted {
    position: relative;
}
.sorted::before {
    content: "";
    position: absolute;
    top: 1px;
    left: 50%;
    margin-left: -5px;
    border: 3px solid transparent;
    border-bottom-color: #6c8096;
    border-top: 0;
}
/* gap between the header and the first row */
.files tbody::before {
    content: "";
    display: block;
    height: 5px;
}
.files td {
    height: 21px;
    padding: 0 0 0 6px;
    border: 1px solid transparent;
    border-width: 1px 0;
    color: #6d6d6d;
    line-height: 19px;
    white-space: nowrap;
}
.files td:nth-child(2) {
    padding-left: 5px;
}
.files td:first-child {
    padding-left: 3px;
    border-left-width: 1px;
    color: #000;
}
.files td:last-child {
    padding-right: 5px;
    border-right-width: 1px;
    text-align: right;
}
.files td svg {
    margin: 1px 4px 0 0;
    vertical-align: top;
}
.hover td {
    border-color: #cfe2f4;
    background: linear-gradient(#fcfdfe, #f2f7fd);
}
.selected td {
    border-color: #86ace0;
    background: linear-gradient(#e6effb, #c3daf8);
}
.rename {
    width: 113px;
    height: 19px;
    margin: 0 0 0 -4px;
    padding: 0 3px;
    border: 1px solid #000;
    outline: 0;
    background: #fff;
    font: inherit;
    vertical-align: top;
}
.rename::selection {
    background: #3895f2;
    color: #fff;
}
.details {
    display: flex;
    height: 53px;
    padding: 3px 16px 0 17px;
    border-top: 1px solid #d3dbe6;
    background: linear-gradient(#f4f7fb, #eef2f9);
}
.details svg {
    width: 46px;
    height: 46px;
    margin-right: 14px;
}
.d-name {
    display: flex;
    flex-direction: column;
    width: 101px;
    color: #5a6779;
    line-height: 18px;
    padding-top: 3px;
}
.d-name strong {
    color: #000;
    font-size: 13px;
    font-weight: 400;
    white-space: nowrap;
}
.details dl {
    display: grid;
    grid-template-columns: auto auto;
    grid-auto-rows: 18px;
    gap: 0 3px;
    margin: 3px 22px 0 0;
    line-height: 18px;
}
.details dt {
    color: #5a6779;
    text-align: right;
}
.details dd {
    margin: 0;
    color: #1e2c4a;
}

/* taskbar */
.taskbar {
    display: flex;
    height: 40px;
    border-top: 1px solid #0a2744;
    background:
        linear-gradient(50deg, transparent 43%, rgba(170, 205, 235, .65) 50%, transparent 57%) 735px 0 / 130px 100% no-repeat,
        linear-gradient(90deg, #2c749f, #4c9fca 15%, #3d92c6 35%, #2b7cbc 55%, #1f68ac 70%, #1a4f88 82%, #164478);
    box-shadow: inset 0 1px rgba(200, 232, 250, .6);
}
.start {
    width: 40px;
    margin: 0 13px 0 7px;
}
.start svg {
    display: block;
    width: 40px;
    height: 39px;
}
.task {
    display: grid;
    place-items: center;
    width: 58px;
    height: 38px;
    margin: 1px 4px 0 0;
    border-radius: 3px;
}
.task svg {
    width: 36px;
    height: 32px;
}
.active {
    border: 1px solid #e4f3fc;
    background: linear-gradient(135deg, #c9e2ef, #8fc2dd);
}
.running {
    border: 1px solid #9ccbe4;
    background: linear-gradient(135deg, #a0cee5, #5aa4cc);
}
.tray {
    display: flex;
    align-items: center;
    color: #fff;
}
.tray svg {
    display: block;
    width: 16px;
    height: 16px;
}
.tray button:first-child svg {
    width: 8px;
}
.t-cpu svg {
    width: 12px;
}
.t-cpu {
    margin: 0 15px;
}
.t-net, .t-flag {
    margin-right: 8px;
}
.t-vol {
    margin-right: 18px;
}
.clock {
    width: 52px;
    margin-right: 9px;
    text-align: center;
}
.show-desktop {
    width: 14px;
    border: 1px solid #7c9dbd;
    background: linear-gradient(#5b7fa6, #1d426f);
}
```
